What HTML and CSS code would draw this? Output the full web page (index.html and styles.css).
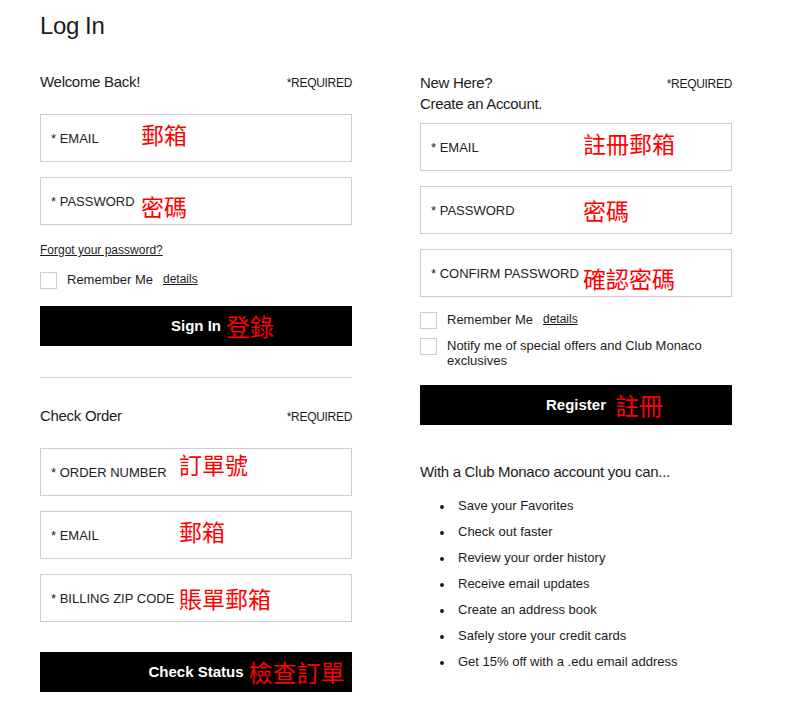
FILE: index.html
```html
<!DOCTYPE html>
<html lang="en">
<head>
    <meta charset="UTF-8">
    <meta name="viewport" content="width=device-width, initial-scale=1.0">
    <title>Log In | Club Monaco</title>
    <link rel="stylesheet" href="styles.css">
</head>
<body>
    <div class="page">
        <h1 class="page-title">Log In</h1>

        <div class="columns">
            <div class="column">
                <form class="panel" id="login-form">
                    <div class="panel-head">
                        <h2>Welcome Back!</h2>
                        <span class="required">*REQUIRED</span>
                    </div>

                    <label class="field">
                        <span class="field-label">* EMAIL</span>
                        <span class="note note-login note-up">郵箱</span>
                        <input type="email" name="email">
                    </label>
                    <label class="field">
                        <span class="field-label">* PASSWORD</span>
                        <span class="note note-login note-down">密碼</span>
                        <input type="password" name="password">
                    </label>

                    <a href="#" class="forgot">Forgot your password?</a>

                    <div class="check-row">
                        <span class="checkbox"></span>
                        <span class="check-text">Remember Me</span>
                        <a href="#" class="details">details</a>
                    </div>

                    <button type="submit" class="btn">
                        <span class="btn-label">Sign In<span class="btn-note">登錄</span></span>
                    </button>
                </form>

                <hr class="divider">

                <form class="panel" id="order-form">
                    <div class="panel-head">
                        <h2>Check Order</h2>
                        <span class="required">*REQUIRED</span>
                    </div>

                    <label class="field">
                        <span class="field-label">* ORDER NUMBER</span>
                        <span class="note note-order note-top">訂單號</span>
                        <input type="text" name="orderNumber">
                    </label>
                    <label class="field">
                        <span class="field-label">* EMAIL</span>
                        <span class="note note-order note-up">郵箱</span>
                        <input type="email" name="orderEmail">
                    </label>
                    <label class="field">
                        <span class="field-label">* BILLING ZIP CODE</span>
                        <span class="note note-order">賬單郵箱</span>
                        <input type="text" name="zip">
                    </label>

                    <button type="submit" class="btn btn-status">
                        <span class="btn-label">Check Status<span class="btn-note">檢查訂單</span></span>
                    </button>
                </form>
            </div>

            <div class="column">
                <form class="panel" id="register-form">
                    <div class="panel-head panel-head-tall">
                        <h2>New Here?<br>Create an Account.</h2>
                        <span class="required">*REQUIRED</span>
                    </div>

                    <label class="field">
                        <span class="field-label">* EMAIL</span>
                        <span class="note note-register note-up">註冊郵箱</span>
                        <input type="email" name="newEmail">
                    </label>
                    <label class="field">
                        <span class="field-label">* PASSWORD</span>
                        <span class="note note-register">密碼</span>
                        <input type="password" name="newPassword">
                    </label>
                    <label class="field">
                        <span class="field-label">* CONFIRM PASSWORD</span>
                        <span class="note note-register note-down">確認密碼</span>
                        <input type="password" name="confirmPassword">
                    </label>

                    <div class="check-row check-row-tight">
                        <span class="checkbox"></span>
                        <span class="check-text">Remember Me</span>
                        <a href="#" class="details">details</a>
                    </div>
                    <div class="check-row check-row-offers">
                        <span class="checkbox"></span>
                        <span class="check-text">Notify me of special offers and Club Monaco exclusives</span>
                    </div>

                    <button type="submit" class="btn btn-register">
                        <span class="btn-label">Register<span class="btn-note btn-note-wide">註冊</span></span>
                    </button>
                </form>

                <div class="perks">
                    <p>With a Club Monaco account you can...</p>
                    <ul>
                        <li>Save your Favorites</li>
                        <li>Check out faster</li>
                        <li>Review your order history</li>
                        <li>Receive email updates</li>
                        <li>Create an address book</li>
                        <li>Safely store your credit cards</li>
                        <li>Get 15% off with a .edu email address</li>
                    </ul>
                </div>
            </div>
        </div>
    </div>
</body>
</html>
```

FILE: styles.css
```css
body {
    font-family: 'Liberation Sans', Arial, sans-serif;
    margin: 0;
    padding: 0;
    background-color: #ffffff;
    color: #1c1c1c;
}
.page {
    padding: 10px 40px 0;
}
.page-title {
    font-size: 24px;
    font-weight: normal;
    line-height: 32px;
    letter-spacing: -0.4px;
    margin: 0 0 30px;
}
.columns {
    display: grid;
    grid-template-columns: 312px 312px;
    column-gap: 68px;
}
.panel {
    display: flex;
    flex-direction: column;
}
.panel-head {
    display: flex;
    justify-content: space-between;
    align-items: baseline;
    margin-bottom: 21px;
}
.panel-head h2 {
    font-size: 15px;
    font-weight: normal;
    line-height: 20px;
    letter-spacing: -0.3px;
    margin: 0;
}
.panel-head-tall {
    margin-bottom: 9px;
}
.panel-head-tall h2 {
    line-height: 21px;
}
.required {
    font-size: 12px;
    line-height: 20px;
    letter-spacing: -0.3px;
}

/* input boxes */
.field {
    position: relative;
    display: flex;
    align-items: center;
    height: 48px;
    box-sizing: border-box;
    border: 1px solid #cccccc;
    padding: 0 10px;
    margin-bottom: 15px;
}
.field:last-of-type {
    margin-bottom: 0;
}
.field-label {
    font-size: 13px;
    color: #222;
    white-space: nowrap;
}
.field input {
    position: absolute;
    inset: 0;
    border: none;
    background: transparent;
    outline: none;
}
.note {
    position: absolute;
    top: 50%;
    margin-top: -14px;
    font-family: 'Noto Sans CJK TC', sans-serif;
    font-size: 23px;
    line-height: 28px;
    color: #ff0000;
}
.note-login { left: 100px; }
.note-order { left: 138px; }
.note-register { left: 162px; }
.note-up { margin-top: -18px; }
.note-top { margin-top: -22px; }
.note-down { margin-top: -9px; }

.forgot {
    font-size: 12px;
    line-height: 16px;
    color: #1c1c1c;
    margin-top: 17px;
    align-self: flex-start;
}
.check-row {
    display: flex;
    align-items: flex-start;
    margin-top: 14px;
}
.check-row-tight {
    margin-top: 15px;
}
.check-row-offers {
    margin-top: 9px;
}
.checkbox {
    flex: none;
    box-sizing: border-box;
    width: 17px;
    height: 17px;
    border: 1px solid #cccccc;
    margin-right: 10px;
}
.check-text {
    font-size: 13px;
    line-height: 15px;
}
.details {
    font-size: 12px;
    line-height: 15px;
    color: #1c1c1c;
    margin-left: 10px;
}
.btn {
    height: 40px;
    margin-top: 17px;
    padding: 0 0 1px;
    background-color: #000;
    color: #fff;
    border: none;
    font-family: inherit;
    font-size: 15px;
    font-weight: bold;
    cursor: pointer;
}
.btn-status {
    margin-top: 30px;
}
.btn-register {
    margin-top: 17px;
}
.btn-label {
    position: relative;
}
.btn-note {
    position: absolute;
    left: 100%;
    top: 50%;
    margin-top: -15px;
    margin-left: 5px;
    font-family: 'Noto Sans CJK TC', sans-serif;
    font-size: 24px;
    line-height: 30px;
    font-weight: normal;
    color: #ff0000;
    white-space: nowrap;
}
.btn-note-wide {
    margin-left: 9px;
}
.divider {
    border: none;
    border-top: 1px solid #cccccc;
    margin: 31px 0 28px;
}

/* account perks */
.perks {
    margin-top: 37px;
}
.perks p {
    font-size: 15px;
    line-height: 20px;
    letter-spacing: -0.3px;
    margin: 0 0 11px;
}
.perks ul {
    list-style: none;
    margin: 0;
    padding-left: 20px;
}
.perks li {
    font-size: 13px;
    line-height: 26px;
}
.perks li::before {
    content: '';
    display: inline-block;
    width: 4px;
    height: 4px;
    border-radius: 50%;
    background-color: #1c1c1c;
    margin-right: 14px;
    vertical-align: middle;
}
```
